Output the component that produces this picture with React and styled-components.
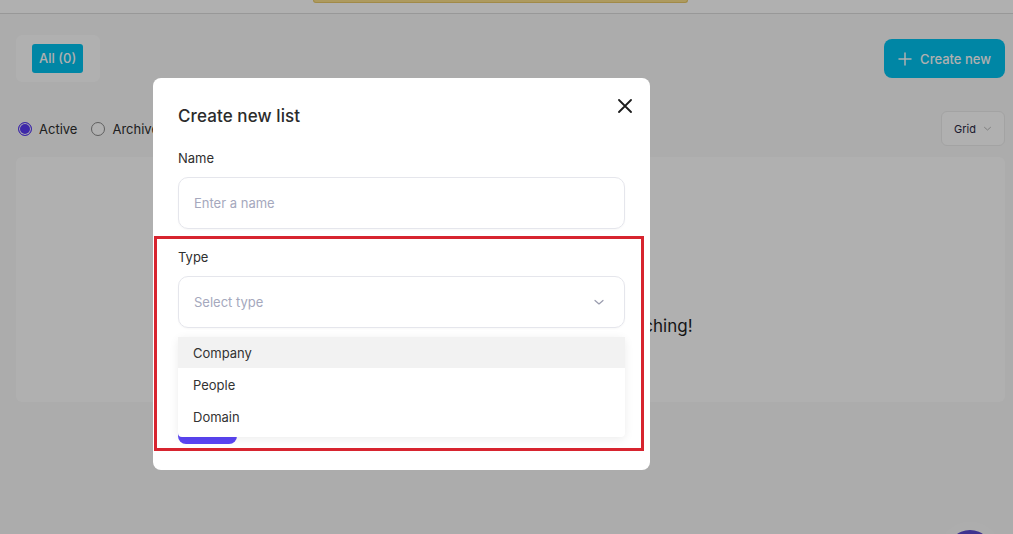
import React from 'react'
import styled, { createGlobalStyle } from 'styled-components'

const GlobalStyle = createGlobalStyle`
  html, body { margin: 0; padding: 0; }
  body {
    font-family: Inter, "Noto Sans", Arial, sans-serif;
    background: #f9f9f9;
    color: #2b2b2b;
    width: 1013px;
    height: 534px;
    overflow: hidden;
  }
  * { box-sizing: border-box; }
`

const Page = styled.div`
    position: relative;
    width: 1013px;
    height: 534px;
    overflow: hidden;
`

const Header = styled.div`
    height: 14px;
    background: #ffffff;
    border-bottom: 1px solid #dcdcdc;
    display: flex;
    justify-content: center;
    padding-right: 12px;
`

const Banner = styled.div`
    width: 375px;
    height: 3px;
    background: #fbe08a;
    border: 1px solid #e9c869;
    border-top: none;
    border-radius: 0 0 6px 6px;
`

const Main = styled.div`
    padding: 21px 8px 0 16px;
`

const Toolbar = styled.div`
    display: flex;
    justify-content: space-between;
    align-items: center;
`

const TabBox = styled.div`
    padding: 9px 17px 9px 16px;
    background: #ffffff;
    border-radius: 6px;
`

const Chip = styled.div`
    background: #00c2ef;
    color: #ffffff;
    font-size: 13px;
    font-weight: 500;
    padding: 6px 7px;
    border-radius: 3px;
    line-height: 17px;
`

const PrimaryButton = styled.button`
    display: flex;
    align-items: center;
    gap: 8px;
    height: 39px;
    padding: 0 14px;
    border: none;
    border-radius: 8px;
    background: #00c2ef;
    color: #ffffff;
    font-family: inherit;
    font-size: 13px;
    font-weight: 500;
`

const FilterRow = styled.div`
    display: flex;
    justify-content: space-between;
    align-items: center;
    margin-top: 29px;
`

const Radios = styled.div`
    display: flex;
    gap: 14px;
    padding-left: 2px;
`

const RadioLabel = styled.label`
    display: flex;
    align-items: center;
    gap: 7px;
    font-size: 13px;
    color: #2e2e2e;
`

const RadioDot = styled.span`
    width: 14px;
    height: 14px;
    border-radius: 50%;
    border: 1px solid ${p => (p.$on ? '#5a3cf5' : '#8a8a8a')};
    background: ${p => (p.$on ? '#5a3cf5' : '#ffffff')};
    box-shadow: ${p => (p.$on ? 'inset 0 0 0 1px #ffffff' : 'none')};
`

const ViewSelect = styled.div`
    display: flex;
    align-items: center;
    gap: 7px;
    height: 35px;
    padding: 0 12px 0 12px;
    border: 1px solid #ececec;
    border-radius: 6px;
    font-size: 11px;
    color: #2a2a44;
    background: #ffffff;
`

const Panel = styled.div`
    margin-top: 11px;
    height: 245px;
    background: #ffffff;
    border-radius: 6px;
    display: flex;
    align-items: center;
    justify-content: center;
    font-size: 17px;
    color: #1e1e1e;
    padding-top: 92px;
    padding-left: 10px;
`

const Overlay = styled.div`
    position: absolute;
    inset: 0;
    background: rgba(0, 0, 0, 0.31);
`

const ChatBubble = styled.div`
    position: absolute;
    right: 20px;
    bottom: -42px;
    width: 46px;
    height: 46px;
    border-radius: 50%;
    background: #5a4ad0;
    box-shadow: 0 0 24px 10px rgba(255, 255, 255, 0.6);
`

const Modal = styled.div`
    position: absolute;
    left: 153px;
    top: 78px;
    width: 497px;
    height: 392px;
    background: #ffffff;
    border-radius: 8px;
    padding: 28px 25px 0 25px;
`

const ModalHead = styled.div`
    display: flex;
    justify-content: space-between;
    align-items: center;
`

const Title = styled.h3`
    margin: 0;
    font-size: 17px;
    font-weight: 500;
    color: #2b2b2b;
    letter-spacing: 0.1px;
`

const CloseButton = styled.button`
    border: none;
    background: none;
    padding: 0;
    margin: -20px -7px 0 0;
    display: flex;
    color: #1c1c1c;
`

const Field = styled.div`
    margin-top: ${p => p.$top}px;
`

const Label = styled.div`
    font-size: 13px;
    color: #2f2f2f;
    margin-bottom: 11px;
`

const InputBox = styled.div`
    height: 52px;
    border: 1px solid #e5e6ec;
    border-radius: 10px;
    display: flex;
    align-items: center;
    justify-content: space-between;
    padding: 0 19px 0 15px;
    font-size: 13px;
    color: #a5a8bd;
    box-shadow: 0 1px 2px rgba(0, 0, 0, 0.03);
`

const SelectWrap = styled.div`
    position: relative;
`

const Menu = styled.ul`
    position: absolute;
    z-index: 2;
    left: 0;
    right: 0;
    top: 61px;
    margin: 0;
    padding: 0 0 5px;
    list-style: none;
    background: #ffffff;
    border-radius: 4px;
    box-shadow: 0 2px 10px rgba(0, 0, 0, 0.08);
`

const Option = styled.li`
    height: ${p => (p.$active ? 31 : 32)}px;
    display: flex;
    align-items: center;
    padding-left: 15px;
    padding-top: ${p => (p.$active ? 0 : 2)}px;
    font-size: 13px;
    color: #333333;
    background: ${p => (p.$active ? '#f2f2f2' : '#ffffff')};
`

const SubmitButton = styled.button`
    display: block;
    margin-top: 76px;
    width: 59px;
    height: 40px;
    border: none;
    border-radius: 8px;
    background: #5b45f5;
`

const Highlight = styled.div`
    position: absolute;
    left: 154px;
    top: 236px;
    width: 490px;
    height: 215px;
    border: 3px solid #d7242f;
    pointer-events: none;
`

const Chevron = ({ size = 12, color = '#9a9cae' }) => (
    <svg width={size} height={size} viewBox="0 0 12 12" fill="none">
        <path d="M2 4.5 L6 8 L10 4.5" stroke={color} strokeWidth="1.2" strokeLinecap="round" strokeLinejoin="round" />
    </svg>
)

const App = () => (
    <Page>
        <GlobalStyle />
        <Header><Banner /></Header>
        <Main>
            <Toolbar>
                <TabBox><Chip>All (0)</Chip></TabBox>
                <PrimaryButton>
                    <svg width="14" height="14" viewBox="0 0 14 14" fill="none">
                        <path d="M7 1v12M1 7h12" stroke="#fff" strokeWidth="1.5" strokeLinecap="round" />
                    </svg>
                    Create new
                </PrimaryButton>
            </Toolbar>
            <FilterRow>
                <Radios>
                    <RadioLabel><RadioDot $on />Active</RadioLabel>
                    <RadioLabel><RadioDot />Archived</RadioLabel>
                </Radios>
                <ViewSelect>Grid <Chevron size={9} color="#b0b0b0" /></ViewSelect>
            </FilterRow>
            <Panel>You don't have any lists yet, start searching!</Panel>
        </Main>
        <ChatBubble />
        <Overlay />
        <Modal>
            <ModalHead>
                <Title>Create new list</Title>
                <CloseButton aria-label="Close">
                    <svg width="14" height="14" viewBox="0 0 14 14" fill="none">
                        <path d="M1 1l12 12M13 1L1 13" stroke="currentColor" strokeWidth="1.8" strokeLinecap="round" />
                    </svg>
                </CloseButton>
            </ModalHead>
            <Field $top={24}>
                <Label>Name</Label>
                <InputBox>Enter a name</InputBox>
            </Field>
            <Field $top={20}>
                <Label>Type</Label>
                <SelectWrap>
                    <InputBox>Select type <Chevron /></InputBox>
                    <Menu>
                        <Option $active>Company</Option>
                        <Option>People</Option>
                        <Option>Domain</Option>
                    </Menu>
                </SelectWrap>
            </Field>
            <SubmitButton aria-label="Create" />
        </Modal>
        <Highlight />
    </Page>
)

export default App
